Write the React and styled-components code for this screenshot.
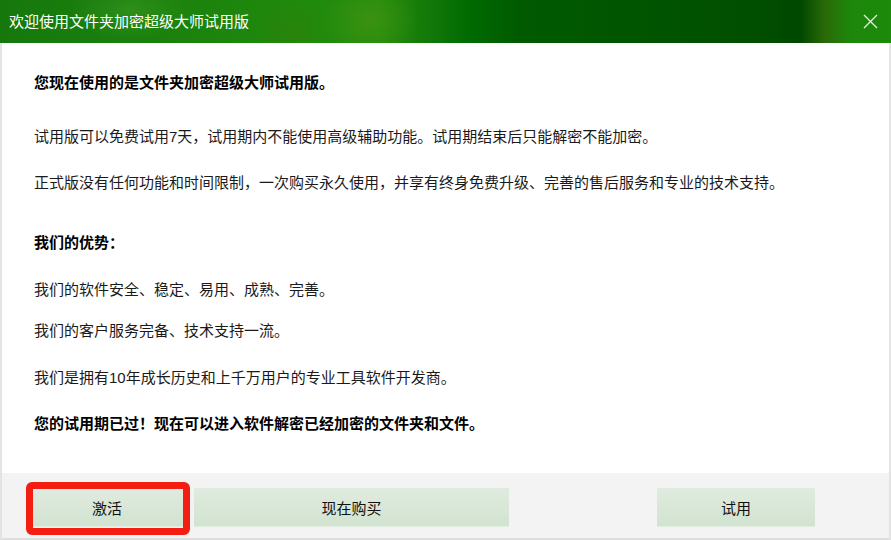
import React from 'react'
import styled, { createGlobalStyle } from 'styled-components'

const GlobalStyle = createGlobalStyle`
	html, body {
		margin: 0;
		padding: 0;
		background: #ffffff;
	}
	body {
		font-family: "Liberation Sans", "Noto Sans CJK SC", sans-serif;
	}
`

const Window = styled.div`
	width: 891px;
	height: 540px;
	display: flex;
	flex-direction: column;
	overflow: hidden;
`

const TitleBar = styled.div`
	height: 43px;
	flex: none;
	display: flex;
	align-items: center;
	justify-content: space-between;
	padding: 0 12px 0 9px;
	box-sizing: border-box;
	background:
		radial-gradient(ellipse 60px 30px at 130px 10px, rgba(70,160,40,.45), transparent),
		radial-gradient(ellipse 50px 40px at 370px 20px, rgba(80,150,20,.55), transparent),
		radial-gradient(ellipse 40px 30px at 290px 30px, rgba(60,120,10,.35), transparent),
		linear-gradient(90deg,
			#16780c 0px,
			#1b820c 180px,
			#1f8a0c 300px,
			#228c0c 380px,
			#127808 430px,
			#006a00 470px,
			#005a00 520px,
			#005600 620px,
			#004e00 760px,
			#004800 800px,
			#2a6a08 825px,
			#1d870a 850px,
			#1c8a0a 891px);
`

const Title = styled.span`
	color: #ffffff;
	font-size: 15px;
	line-height: 20px;
`

const CloseButton = styled.button`
	width: 18px;
	height: 18px;
	padding: 0;
	border: none;
	background: none;
	display: flex;
	align-items: center;
	justify-content: center;
	cursor: pointer;
`

const Body = styled.div`
	flex: 1;
	background: #ffffff;
	border-left: 2px solid #e3e3e3;
	border-right: 2px solid #e3e3e3;
	padding: 30px 0 0 32px;
	display: flex;
	flex-direction: column;
`

const Paragraph = styled.p`
	margin: ${props => props.$gap}px 0 0 0;
	font-size: 15px;
	line-height: 20px;
	color: ${props => props.$bold ? '#000000' : '#1a1a1a'};
	font-weight: ${props => props.$bold ? 700 : 400};
`

const Footer = styled.div`
	height: 67px;
	flex: none;
	box-sizing: border-box;
	background: #f3f3f3;
	border-left: 2px solid #e3e3e3;
	border-right: 2px solid #e3e3e3;
	border-bottom: 2px solid #dedede;
	padding: 15px 74px 0 26px;
	display: flex;
	align-items: flex-start;
	gap: 8px;
`

const Button = styled.button`
	position: relative;
	width: ${props => props.$width}px;
	height: 39px;
	margin-left: ${props => props.$push ? 'auto' : '0'};
	border: none;
	border-bottom: 1px solid #e4ede3;
	background: linear-gradient(180deg, #e0ebdf 0%, #d2e3d0 100%);
	font-family: "Liberation Sans", "Noto Sans CJK SC", sans-serif;
	font-size: 15px;
	color: #111111;
	cursor: pointer;
`

const Highlight = styled.span`
	position: absolute;
	left: -2px;
	top: -6px;
	width: 164px;
	height: 53px;
	box-sizing: border-box;
	border: 7px solid #f41d12;
	border-radius: 6px;
	pointer-events: none;
`

export default function App() {
	return (
		<Window>
			<GlobalStyle />
			<TitleBar>
				<Title>欢迎使用文件夹加密超级大师试用版</Title>
				<CloseButton aria-label="关闭">
					<svg width="15" height="15" viewBox="0 0 15 15">
						<path d="M1 1 L14 14 M14 1 L1 14" stroke="#e8f2e4" strokeWidth="1.3" fill="none" />
					</svg>
				</CloseButton>
			</TitleBar>
			<Body>
				<Paragraph $gap={0} $bold>您现在使用的是文件夹加密超级大师试用版。</Paragraph>
				<Paragraph $gap={34}>试用版可以免费试用7天，试用期内不能使用高级辅助功能。试用期结束后只能解密不能加密。</Paragraph>
				<Paragraph $gap={26}>正式版没有任何功能和时间限制，一次购买永久使用，并享有终身免费升级、完善的售后服务和专业的技术支持。</Paragraph>
				<Paragraph $gap={40} $bold>我们的优势：</Paragraph>
				<Paragraph $gap={27}>我们的软件安全、稳定、易用、成熟、完善。</Paragraph>
				<Paragraph $gap={21}>我们的客户服务完备、技术支持一流。</Paragraph>
				<Paragraph $gap={27}>我们是拥有10年成长历史和上千万用户的专业工具软件开发商。</Paragraph>
				<Paragraph $gap={26} $bold>您的试用期已过！现在可以进入软件解密已经加密的文件夹和文件。</Paragraph>
			</Body>
			<Footer>
				<Button $width={158}>
					激活
					<Highlight />
				</Button>
				<Button $width={315}>现在购买</Button>
				<Button $width={158} $push>试用</Button>
			</Footer>
		</Window>
	)
}
